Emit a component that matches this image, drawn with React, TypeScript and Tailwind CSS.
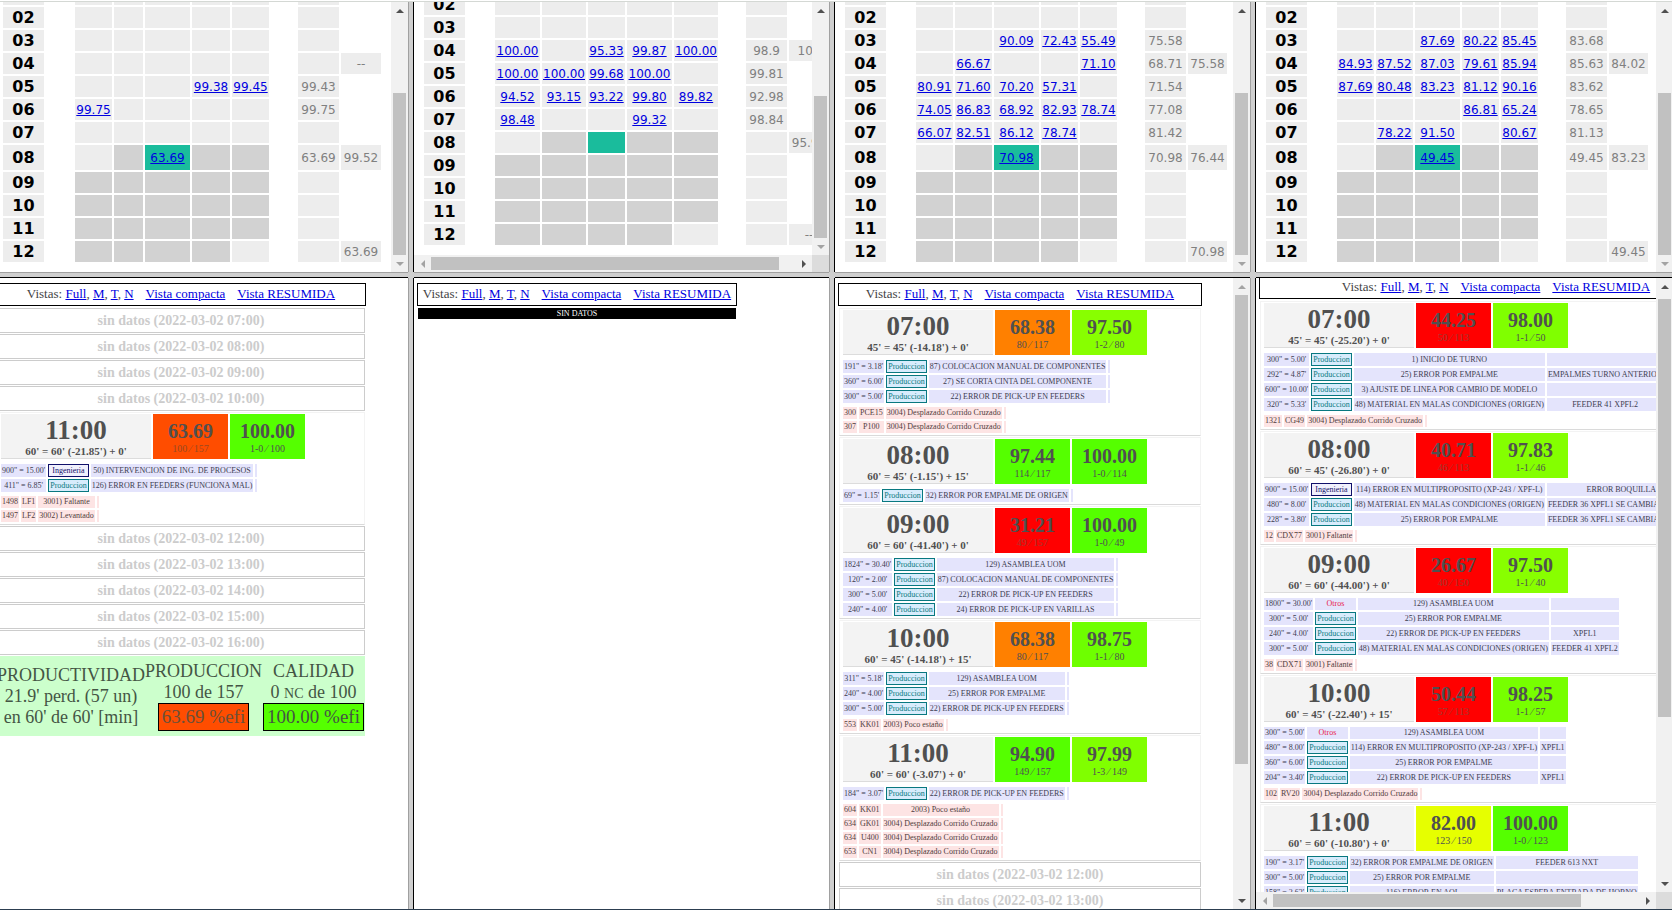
import { Fragment, type ReactNode } from "react";

/* ---------- data ---------- */

type Calendar = {
  id: string;
  widths: number[];
  tall: boolean;
  days: Record<string, string[]>;
  totals: Record<string, string>;
  quarters: Record<string, string>;
};

const MONTHS = ["01", "02", "03", "04", "05", "06", "07", "08", "09", "10", "11", "12"];

const CALENDARS: Calendar[] = [
  {
    id: "linea-1",
    widths: [41, 27, 37, 29, 45, 38, 37, 25, 41, 40],
    tall: true,
    days: {
      "05": ["", "", "", "99.38", "99.45"],
      "06": ["99.75", "", "", "", ""],
      "08": ["", "", "63.69", "", ""],
    },
    totals: { "05": "99.43", "06": "99.75", "08": "63.69" },
    quarters: { "04": "--", "08": "99.52", "12": "63.69" },
  },
  {
    id: "linea-2",
    widths: [41, 26, 45, 44, 37, 45, 44, 24, 41, 40],
    tall: false,
    days: {
      "04": ["100.00", "", "95.33", "99.87", "100.00"],
      "05": ["100.00", "100.00", "99.68", "100.00", ""],
      "06": ["94.52", "93.15", "93.22", "99.80", "89.82"],
      "07": ["98.48", "", "", "99.32", ""],
    },
    totals: { "04": "98.9", "05": "99.81", "06": "92.98", "07": "98.84" },
    quarters: { "04": "100", "08": "95.98", "12": "--" },
  },
  {
    id: "linea-3",
    widths: [41, 26, 37, 37, 45, 37, 37, 24, 41, 39],
    tall: true,
    days: {
      "03": ["", "", "90.09", "72.43", "55.49"],
      "04": ["", "66.67", "", "", "71.10"],
      "05": ["80.91", "71.60", "70.20", "57.31", ""],
      "06": ["74.05", "86.83", "68.92", "82.93", "78.74"],
      "07": ["66.07", "82.51", "86.12", "78.74", ""],
      "08": ["", "", "70.98", "", ""],
    },
    totals: { "03": "75.58", "04": "68.71", "05": "71.54", "06": "77.08", "07": "81.42", "08": "70.98" },
    quarters: { "04": "75.58", "08": "76.44", "12": "70.98" },
  },
  {
    id: "linea-4",
    widths: [41, 26, 37, 37, 45, 37, 37, 24, 41, 39],
    tall: true,
    days: {
      "03": ["", "", "87.69", "80.22", "85.45"],
      "04": ["84.93", "87.52", "87.03", "79.61", "85.94"],
      "05": ["87.69", "80.48", "83.23", "81.12", "90.16"],
      "06": ["", "", "", "86.81", "65.24"],
      "07": ["", "78.22", "91.50", "", "80.67"],
      "08": ["", "", "49.45", "", ""],
    },
    totals: { "03": "83.68", "04": "85.63", "05": "83.62", "06": "78.65", "07": "81.13", "08": "49.45" },
    quarters: { "04": "84.02", "08": "83.23", "12": "49.45" },
  },
];

type Stop = [time: string, area: "Produccion" | "Ingenieria" | "Otros", cause: string, note?: string];
type Defect = [id: string, position: string, kind: string];
type Hour = {
  hour: string;
  detail: string;
  eff: string;
  effDetail: string;
  effColor: string;
  effDetailColor?: string;
  quality: string;
  qualityDetail: string;
  qualityColor: string;
  stops: Stop[];
  defects: Defect[];
};

const RED = "bg-[#ff0000]";
const ON_RED = "text-[#a03a30]";
const LIME = "bg-[#55ff00]";

const LINE_1: Hour[] = [
  {
    hour: "11:00", detail: "60' = 60' (-21.85') + 0'",
    eff: "63.69", effDetail: "100 ⁄ 157", effColor: "bg-[#ff4d00]", effDetailColor: "text-[#9a4a20]",
    quality: "100.00", qualityDetail: "1-0 ⁄ 100", qualityColor: LIME,
    stops: [
      ["900\" = 15.00'", "Ingenieria", "50) INTERVENCION DE ING. DE PROCESOS"],
      ["411\" = 6.85'", "Produccion", "126) ERROR EN FEEDERS (FUNCIONA MAL)"],
    ],
    defects: [["1498", "LF1", "3001) Faltante"], ["1497", "LF2", "3002) Levantado"]],
  },
];

const LINE_3: Hour[] = [
  {
    hour: "07:00", detail: "45' = 45' (-14.18') + 0'",
    eff: "68.38", effDetail: "80 ⁄ 117", effColor: "bg-[#ff8000]",
    quality: "97.50", qualityDetail: "1-2 ⁄ 80", qualityColor: "bg-[#88ff00]",
    stops: [
      ["191\" = 3.18'", "Produccion", "87) COLOCACION MANUAL DE COMPONENTES"],
      ["360\" = 6.00'", "Produccion", "27) SE CORTA CINTA DEL COMPONENTE"],
      ["300\" = 5.00'", "Produccion", "22) ERROR DE PICK-UP EN FEEDERS"],
    ],
    defects: [["300", "PCE15", "3004) Desplazado Corrido Cruzado"], ["307", "P100", "3004) Desplazado Corrido Cruzado"]],
  },
  {
    hour: "08:00", detail: "60' = 45' (-1.15') + 15'",
    eff: "97.44", effDetail: "114 ⁄ 117", effColor: LIME,
    quality: "100.00", qualityDetail: "1-0 ⁄ 114", qualityColor: LIME,
    stops: [["69\" = 1.15'", "Produccion", "32) ERROR POR EMPALME DE ORIGEN"]],
    defects: [],
  },
  {
    hour: "09:00", detail: "60' = 60' (-41.40') + 0'",
    eff: "31.21", effDetail: "49 ⁄ 157", effColor: RED, effDetailColor: ON_RED,
    quality: "100.00", qualityDetail: "1-0 ⁄ 49", qualityColor: LIME,
    stops: [
      ["1824\" = 30.40'", "Produccion", "129) ASAMBLEA UOM"],
      ["120\" = 2.00'", "Produccion", "87) COLOCACION MANUAL DE COMPONENTES"],
      ["300\" = 5.00'", "Produccion", "22) ERROR DE PICK-UP EN FEEDERS"],
      ["240\" = 4.00'", "Produccion", "24) ERROR DE PICK-UP EN VARILLAS"],
    ],
    defects: [],
  },
  {
    hour: "10:00", detail: "60' = 45' (-14.18') + 15'",
    eff: "68.38", effDetail: "80 ⁄ 117", effColor: "bg-[#ff8000]",
    quality: "98.75", qualityDetail: "1-1 ⁄ 80", qualityColor: "bg-[#6eff00]",
    stops: [
      ["311\" = 5.18'", "Produccion", "129) ASAMBLEA UOM"],
      ["240\" = 4.00'", "Produccion", "25) ERROR POR EMPALME"],
      ["300\" = 5.00'", "Produccion", "22) ERROR DE PICK-UP EN FEEDERS"],
    ],
    defects: [["553", "KK01", "2003) Poco estaño"]],
  },
  {
    hour: "11:00", detail: "60' = 60' (-3.07') + 0'",
    eff: "94.90", effDetail: "149 ⁄ 157", effColor: LIME,
    quality: "97.99", qualityDetail: "1-3 ⁄ 149", qualityColor: "bg-[#80ff00]",
    stops: [["184\" = 3.07'", "Produccion", "22) ERROR DE PICK-UP EN FEEDERS"]],
    defects: [
      ["604", "KK01", "2003) Poco estaño"],
      ["634", "GK01", "3004) Desplazado Corrido Cruzado"],
      ["634", "U400", "3004) Desplazado Corrido Cruzado"],
      ["653", "CN1", "3004) Desplazado Corrido Cruzado"],
    ],
  },
];

const LINE_4: Hour[] = [
  {
    hour: "07:00", detail: "45' = 45' (-25.20') + 0'",
    eff: "44.25", effDetail: "50 ⁄ 113", effColor: RED, effDetailColor: ON_RED,
    quality: "98.00", qualityDetail: "1-1 ⁄ 50", qualityColor: "bg-[#80ff00]",
    stops: [
      ["300\" = 5.00'", "Produccion", "1) INICIO DE TURNO", ""],
      ["292\" = 4.87'", "Produccion", "25) ERROR POR EMPALME", "EMPALMES TURNO ANTERIOR"],
      ["600\" = 10.00'", "Produccion", "3) AJUSTE DE LINEA POR CAMBIO DE MODELO", ""],
      ["320\" = 5.33'", "Produccion", "48) MATERIAL EN MALAS CONDICIONES (ORIGEN)", "FEEDER 41 XPFL2"],
    ],
    defects: [["1321", "CG49", "3004) Desplazado Corrido Cruzado"]],
  },
  {
    hour: "08:00", detail: "60' = 45' (-26.80') + 0'",
    eff: "40.71", effDetail: "46 ⁄ 113", effColor: RED, effDetailColor: ON_RED,
    quality: "97.83", qualityDetail: "1-1 ⁄ 46", qualityColor: "bg-[#84ff00]",
    stops: [
      ["900\" = 15.00'", "Ingenieria", "114) ERROR EN MULTIPROPOSITO (XP-243 / XPF-L)", "ERROR BOQUILLA FEEDER"],
      ["480\" = 8.00'", "Produccion", "48) MATERIAL EN MALAS CONDICIONES (ORIGEN)", "FEEDER 36 XPFL1 SE CAMBIA BOQUILLA XPFL1"],
      ["228\" = 3.80'", "Produccion", "25) ERROR POR EMPALME", "FEEDER 36 XPFL1 SE CAMBIA BOQUILLA XPFL1"],
    ],
    defects: [["12", "CDX77", "3001) Faltante"]],
  },
  {
    hour: "09:00", detail: "60' = 60' (-44.00') + 0'",
    eff: "26.67", effDetail: "40 ⁄ 150", effColor: RED, effDetailColor: ON_RED,
    quality: "97.50", qualityDetail: "1-1 ⁄ 40", qualityColor: "bg-[#88ff00]",
    stops: [
      ["1800\" = 30.00'", "Otros", "129) ASAMBLEA UOM", ""],
      ["300\" = 5.00'", "Produccion", "25) ERROR POR EMPALME", ""],
      ["240\" = 4.00'", "Produccion", "22) ERROR DE PICK-UP EN FEEDERS", "XPFL1"],
      ["300\" = 5.00'", "Produccion", "48) MATERIAL EN MALAS CONDICIONES (ORIGEN)", "FEEDER 41 XPFL2"],
    ],
    defects: [["38", "CDX71", "3001) Faltante"]],
  },
  {
    hour: "10:00", detail: "60' = 45' (-22.40') + 15'",
    eff: "50.44", effDetail: "57 ⁄ 113", effColor: RED, effDetailColor: ON_RED,
    quality: "98.25", qualityDetail: "1-1 ⁄ 57", qualityColor: "bg-[#77ff00]",
    stops: [
      ["300\" = 5.00'", "Otros", "129) ASAMBLEA UOM", ""],
      ["480\" = 8.00'", "Produccion", "114) ERROR EN MULTIPROPOSITO (XP-243 / XPF-L)", "XPFL1"],
      ["360\" = 6.00'", "Produccion", "25) ERROR POR EMPALME", ""],
      ["204\" = 3.40'", "Produccion", "22) ERROR DE PICK-UP EN FEEDERS", "XPFL1"],
    ],
    defects: [["102", "RV20", "3004) Desplazado Corrido Cruzado"]],
  },
  {
    hour: "11:00", detail: "60' = 60' (-10.80') + 0'",
    eff: "82.00", effDetail: "123 ⁄ 150", effColor: "bg-[#e6ff00]",
    quality: "100.00", qualityDetail: "1-0 ⁄ 123", qualityColor: LIME,
    stops: [
      ["190\" = 3.17'", "Produccion", "32) ERROR POR EMPALME DE ORIGEN", "FEEDER 613 NXT"],
      ["300\" = 5.00'", "Produccion", "25) ERROR POR EMPALME", ""],
      ["158\" = 2.63'", "Produccion", "116) ERROR EN AOI", "PLACA ESPERA ENTRADA DE HORNO"],
    ],
    defects: [],
  },
];

/* ---------- scrollbars ---------- */

const ARROWS = {
  up: "M4 0 L8 4 L0 4 Z",
  down: "M0 0 L8 0 L4 4 Z",
  left: "M4 0 L4 8 L0 4 Z",
  right: "M0 0 L4 4 L0 8 Z",
};

function Arrow({ dir, active }: { dir: keyof typeof ARROWS; active: boolean }) {
  const vertical = dir === "up" || dir === "down";
  return (
    <span className="flex size-[17px] shrink-0 items-center justify-center">
      <svg
        width={vertical ? 8 : 4}
        height={vertical ? 4 : 8}
        className={active ? "fill-[#505050]" : "fill-[#a3a3a3]"}
      >
        <path d={ARROWS[dir]} />
      </svg>
    </span>
  );
}

type BarProps = { before: number; thumb: number; after: number };

function VBar({ before, thumb, after }: BarProps) {
  return (
    <div aria-hidden="true" className="flex w-[17px] shrink-0 flex-col bg-[#f1f1f1]">
      <Arrow dir="up" active={before > 0} />
      <div className="flex grow flex-col px-[2px]">
        <div className="basis-0" style={{ flexGrow: before }} />
        <div className="basis-0 bg-[#c1c1c1]" style={{ flexGrow: thumb }} />
        <div className="basis-0" style={{ flexGrow: after }} />
      </div>
      <Arrow dir="down" active={after > 0} />
    </div>
  );
}

function HBar({ before, thumb, after }: BarProps) {
  return (
    <div aria-hidden="true" className="flex h-[17px] shrink-0 bg-[#f1f1f1]">
      <Arrow dir="left" active={before > 0} />
      <div className="flex grow py-[2px]">
        <div className="basis-0" style={{ flexGrow: before }} />
        <div className="basis-0 bg-[#c1c1c1]" style={{ flexGrow: thumb }} />
        <div className="basis-0" style={{ flexGrow: after }} />
      </div>
      <Arrow dir="right" active={after > 0} />
      <span className="w-[17px] shrink-0 bg-[#dcdcdc]" />
    </div>
  );
}

function Frame({
  children,
  v,
  h,
  bottom = false,
}: {
  children: ReactNode;
  v?: BarProps;
  h?: BarProps;
  bottom?: boolean;
}) {
  return (
    <section className="flex min-h-0 min-w-0 flex-col overflow-hidden bg-white">
      <div className="flex min-h-0 grow">
        <div
          className={
            bottom
              ? "flex min-w-0 grow flex-col justify-end overflow-hidden"
              : "min-w-0 grow overflow-hidden"
          }
        >
          {children}
        </div>
        {v && <VBar {...v} />}
      </div>
      {h && <HBar {...h} />}
    </section>
  );
}

/* ---------- monthly calendar ---------- */

function dayColor(month: string, day: number) {
  const m = Number(month);
  if (m === 8 && day === 2) return "bg-[#1abc9c]";
  if (m === 8 && day > 0) return "bg-[#d2d2d2]";
  if (m > 8 && m < 12) return "bg-[#d2d2d2]";
  if (m === 12 && day < 4) return "bg-[#d2d2d2]";
  return "bg-[#ededed]";
}

function CalendarTable({ data }: { data: Calendar }) {
  const total = data.widths.reduce((sum, w) => sum + w + 2, 2);
  return (
    <table
      className="mb-2 ml-2 shrink-0 table-fixed border-separate border-spacing-[2px] text-center font-['DejaVu_Sans',sans-serif] text-[12px] leading-[14px] text-[#808080]"
      style={{ width: total }}
    >
      <colgroup>
        {data.widths.map((w, i) => (
          <col key={i} style={{ width: w }} />
        ))}
      </colgroup>
      <tbody>
        {MONTHS.map((month) => (
          <tr key={month} className={month === "08" && data.tall ? "h-[25px]" : "h-[21px]"}>
            <th scope="row" className="bg-[#ededed] p-0 text-[16px] leading-[18px] font-bold text-black">
              {month}
            </th>
            <td className="p-0" />
            {[0, 1, 2, 3, 4].map((day) => {
              const value = data.days[month]?.[day];
              return (
                <td key={day} className={`p-0 ${dayColor(month, day)}`}>
                  {value && (
                    <a href={`#${data.id}-${month}-${day}`} className="text-[#0000e0] underline">
                      {value}
                    </a>
                  )}
                </td>
              );
            })}
            <td className="p-0" />
            <td className="bg-[#ededed] p-0">{data.totals[month]}</td>
            <td className={data.quarters[month] ? "bg-[#ededed] p-0" : "p-0"}>{data.quarters[month]}</td>
          </tr>
        ))}
      </tbody>
    </table>
  );
}

/* ---------- hourly report ---------- */

const LINK = "text-[#0000e0] underline";

function Views() {
  return (
    <nav className="flex h-[23px] items-center justify-center gap-3 border border-black pb-[2px] text-[13px] leading-[16px] whitespace-nowrap text-[#444]">
      <span>
        Vistas: <a href="#full" className={LINK}>Full</a>, <a href="#m" className={LINK}>M</a>,{" "}
        <a href="#t" className={LINK}>T</a>, <a href="#n" className={LINK}>N</a>
      </span>
      <a href="#compacta" className={LINK}>Vista compacta</a>
      <a href="#resumida" className={LINK}>Vista RESUMIDA</a>
    </nav>
  );
}

function Empty({ hour }: { hour: string }) {
  return (
    <div className="mx-px flex h-[25px] items-center justify-center border border-[#ccc] text-[14px] leading-[16px] font-bold text-[#ccc]">
      sin datos (2022-03-02 {hour})
    </div>
  );
}

function Rate({ value, detail, color, detailColor }: { value: string; detail: string; color: string; detailColor?: string }) {
  return (
    <div className={`flex h-[45px] w-[75px] flex-col pt-[5px] ${color}`}>
      <strong className="text-[20px] leading-[24px]">{value}</strong>
      <span className={`text-[10px] leading-[12px] ${detailColor ?? ""}`}>{detail}</span>
    </div>
  );
}

const AREA = {
  Produccion: "border border-[#087880] bg-[#d8ecfc] px-px py-0 leading-[11px] text-[#087880]",
  Ingenieria: "border border-[#10106a] bg-[#f0f0fc] px-px py-0 leading-[11px] text-[#10106a]",
  Otros: "bg-[#e4e4fc] p-px text-[#e8204a]",
};

function HourBlock({ data }: { data: Hour }) {
  return (
    <article className="mx-px border border-[#f3f3f3] border-b-[#dadada] pt-px pl-px text-center text-[#505050]">
      <header className="ml-[2px] flex gap-[2px]">
        <div className="flex h-[45px] w-[150px] flex-col border-b border-[#dcdcdc] bg-[#f3f3f3] pt-[2px]">
          <strong className="text-[27px] leading-[28px]">{data.hour}</strong>
          <strong className="text-[11px] leading-[14px]">{data.detail}</strong>
        </div>
        <Rate value={data.eff} detail={data.effDetail} color={data.effColor} detailColor={data.effDetailColor} />
        <Rate value={data.quality} detail={data.qualityDetail} color={data.qualityColor} />
      </header>
      <table className="mt-[3px] border-separate border-spacing-[2px] text-[8px] leading-[10px] whitespace-nowrap text-[#3c3c50]">
        <tbody>
          {data.stops.map(([time, area, cause, note], i) => (
            <tr key={i}>
              <td className="bg-[#e4e4fc] p-px">{time}</td>
              <td className={AREA[area]}>{area}</td>
              <td className="bg-[#e4e4fc] p-px">{cause}</td>
              <td className="bg-[#e4e4fc] p-px">{note}</td>
            </tr>
          ))}
        </tbody>
      </table>
      {data.defects.length > 0 && (
        <table className="border-separate border-spacing-[2px] text-[8px] leading-[10px] whitespace-nowrap text-[#503c3c]">
          <tbody>
            {data.defects.map(([id, position, kind], i) => (
              <tr key={i}>
                <td className="bg-[#fde4e4] p-px">{id}</td>
                <td className="bg-[#fde4e4] p-px">{position}</td>
                <td className="bg-[#fde4e4] p-px">{kind}</td>
                <td className="bg-[#fde4e4] p-px" />
              </tr>
            ))}
          </tbody>
        </table>
      )}
    </article>
  );
}

function Summary() {
  return (
    <div className="mx-px grid h-[80px] grid-cols-[149fr_114fr_105fr] items-center bg-[#ccffcc] text-center text-[18px] leading-[21px] whitespace-nowrap text-[#445544]">
      <div>
        <div>PRODUCTIVIDAD</div>
        <div>21.9' perd. (57 un)</div>
        <div>en 60' de 60' [min]</div>
      </div>
      <div className="flex flex-col items-center">
        <div>PRODUCCION</div>
        <div>100 de 157</div>
        <div className="border border-black bg-[#ff4d00] px-[3px] text-[19px] leading-[26px] text-[#6b5038]">63.69 %efi</div>
      </div>
      <div className="flex flex-col items-center">
        <div>CALIDAD</div>
        <div>
          0 <span className="text-[14px] leading-none">NC</span> de 100
        </div>
        <div className="border border-black bg-[#55ff00] px-[3px] text-[19px] leading-[26px]">100.00 %efi</div>
      </div>
    </div>
  );
}

function Report({ className, children }: { className: string; children: ReactNode }) {
  return (
    <div className={`ml-[3px] pt-[5px] ${className}`}>
      <Views />
      <div className="mt-[2px] flex flex-col gap-px">{children}</div>
    </div>
  );
}

/* ---------- page ---------- */

function Divider() {
  return <div className="border-r border-l border-r-black border-l-[#a0a0a0] bg-[#cfcfcf]" />;
}

export default function App() {
  return (
    <div className="h-screen overflow-hidden bg-white font-['Liberation_Serif',serif]">
      <div className="-mr-px -ml-[7px] flex h-full flex-col border-b border-[#2c3e50]">
        <div className="mt-px h-px shrink-0 bg-[#d4d8d4]" />
        <div className="grid min-h-0 grow grid-cols-[415fr_6px_415fr_6px_415fr_6px_417fr] grid-rows-[270fr_6px_631fr]">
          <Frame bottom v={{ before: 74, thumb: 162, after: 0 }}>
            <CalendarTable data={CALENDARS[0]} />
          </Frame>
          <Divider />
          <Frame bottom v={{ before: 77, thumb: 142, after: 0 }} h={{ before: 0, thumb: 348, after: 16 }}>
            <CalendarTable data={CALENDARS[1]} />
          </Frame>
          <Divider />
          <Frame bottom v={{ before: 74, thumb: 162, after: 0 }}>
            <CalendarTable data={CALENDARS[2]} />
          </Frame>
          <Divider />
          <Frame bottom v={{ before: 74, thumb: 162, after: 0 }}>
            <CalendarTable data={CALENDARS[3]} />
          </Frame>

          {[0, 1, 2, 3].map((i) => (
            <Fragment key={i}>
              <div className="border-t border-b border-t-[#a0a0a0] border-b-black bg-[#cfcfcf]" />
              {i < 3 && <div className="bg-[#cfcfcf]" />}
            </Fragment>
          ))}

          <Frame>
            <Report className="w-[370px]">
              {["07:00", "08:00", "09:00", "10:00"].map((h) => (
                <Empty key={h} hour={h} />
              ))}
              {LINE_1.map((h) => (
                <HourBlock key={h.hour} data={h} />
              ))}
              {["12:00", "13:00", "14:00", "15:00", "16:00"].map((h) => (
                <Empty key={h} hour={h} />
              ))}
              <Summary />
            </Report>
          </Frame>
          <Divider />
          <Frame>
            <Report className="w-[320px]">
              <div className="mx-px bg-black text-center text-[8px] leading-[11px] text-white">SIN DATOS</div>
            </Report>
          </Frame>
          <Divider />
          <Frame v={{ before: 0, thumb: 469, after: 128 }}>
            <Report className="w-[364px]">
              {LINE_3.map((h) => (
                <HourBlock key={h.hour} data={h} />
              ))}
              <Empty hour="12:00" />
              <Empty hour="13:00" />
            </Report>
          </Frame>
          <Divider />
          <Frame v={{ before: 4, thumb: 418, after: 158 }} h={{ before: 0, thumb: 308, after: 58 }}>
            <Report className="-mt-[7px] w-[474px]">
              {LINE_4.map((h) => (
                <HourBlock key={h.hour} data={h} />
              ))}
            </Report>
          </Frame>
        </div>
      </div>
    </div>
  );
}
